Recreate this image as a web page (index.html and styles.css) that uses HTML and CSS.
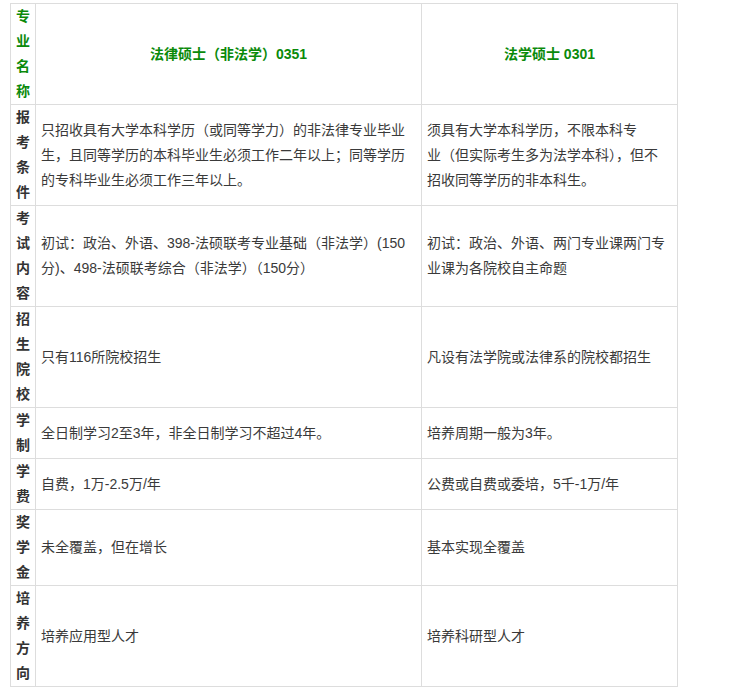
FILE: index.html
```html
<!DOCTYPE html>
<html lang="zh-CN">
<head>
<meta charset="utf-8">
<title>法律硕士与法学硕士对比</title>
<link rel="stylesheet" href="styles.css">
</head>
<body>
<div class="wrap">
<table class="cmp">
  <colgroup>
    <col class="c1">
    <col class="c2">
    <col class="c3">
  </colgroup>
  <thead>
    <tr class="r4">
      <th class="lab green">专业名称</th>
      <th class="head">法律硕士（非法学）0351</th>
      <th class="head">法学硕士 0301</th>
    </tr>
  </thead>
  <tbody>
    <tr>
      <td class="lab">报考条件</td>
      <td>只招收具有大学本科学历（或同等学力）的非法律专业毕业<br>生，且同等学历的本科毕业生必须工作二年以上；同等学历<br>的专科毕业生必须工作三年以上。</td>
      <td>须具有大学本科学历，不限本科专<br>业（但实际考生多为法学本科），但不<br>招收同等学历的非本科生。</td>
    </tr>
    <tr>
      <td class="lab">考试内容</td>
      <td>初试：政治、外语、398-法硕联考专业基础（非法学）(150<br>分)、498-法硕联考综合（非法学）（150分）</td>
      <td>初试：政治、外语、两门专业课两门专<br>业课为各院校自主命题</td>
    </tr>
    <tr>
      <td class="lab">招生院校</td>
      <td>只有116所院校招生</td>
      <td>凡设有法学院或法律系的院校都招生</td>
    </tr>
    <tr>
      <td class="lab">学制</td>
      <td>全日制学习2至3年，非全日制学习不超过4年。</td>
      <td>培养周期一般为3年。</td>
    </tr>
    <tr>
      <td class="lab">学费</td>
      <td>自费，1万-2.5万/年</td>
      <td>公费或自费或委培，5千-1万/年</td>
    </tr>
    <tr>
      <td class="lab">奖学金</td>
      <td>未全覆盖，但在增长</td>
      <td>基本实现全覆盖</td>
    </tr>
    <tr>
      <td class="lab">培养方向</td>
      <td>培养应用型人才</td>
      <td>培养科研型人才</td>
    </tr>
  </tbody>
</table>
</div>
</body>
</html>
```

FILE: styles.css
```css
html, body {
  margin: 0;
  padding: 0;
  background: #ffffff;
}

.wrap {
  padding: 3px 0 0 10px;
}

.cmp {
  table-layout: fixed;
  width: 668px;
  border-collapse: separate;
  border-spacing: 0;
  border-left: 1px solid #dddddd;
  border-top: 1px solid #dddddd;
  font-family: "Liberation Sans", "Noto Sans CJK SC", sans-serif;
  font-size: 14px;
  line-height: 25px;
  color: #3a3a3a;
}

.c1 { width: 25px; }
.c2 { width: 386px; }
.c3 { width: 256px; }

.cmp th,
.cmp td {
  border-right: 1px solid #dddddd;
  border-bottom: 1px solid #dddddd;
  padding: 0 5px;
  vertical-align: middle;
  text-align: left;
  font-weight: normal;
}

.cmp .lab {
  font-weight: bold;
  color: #333333;
  text-align: center;
  word-break: break-all;
}

.cmp .green {
  color: #0a8a0a;
}

.cmp .head {
  text-align: center;
  font-weight: bold;
  color: #0a8a0a;
}
```
